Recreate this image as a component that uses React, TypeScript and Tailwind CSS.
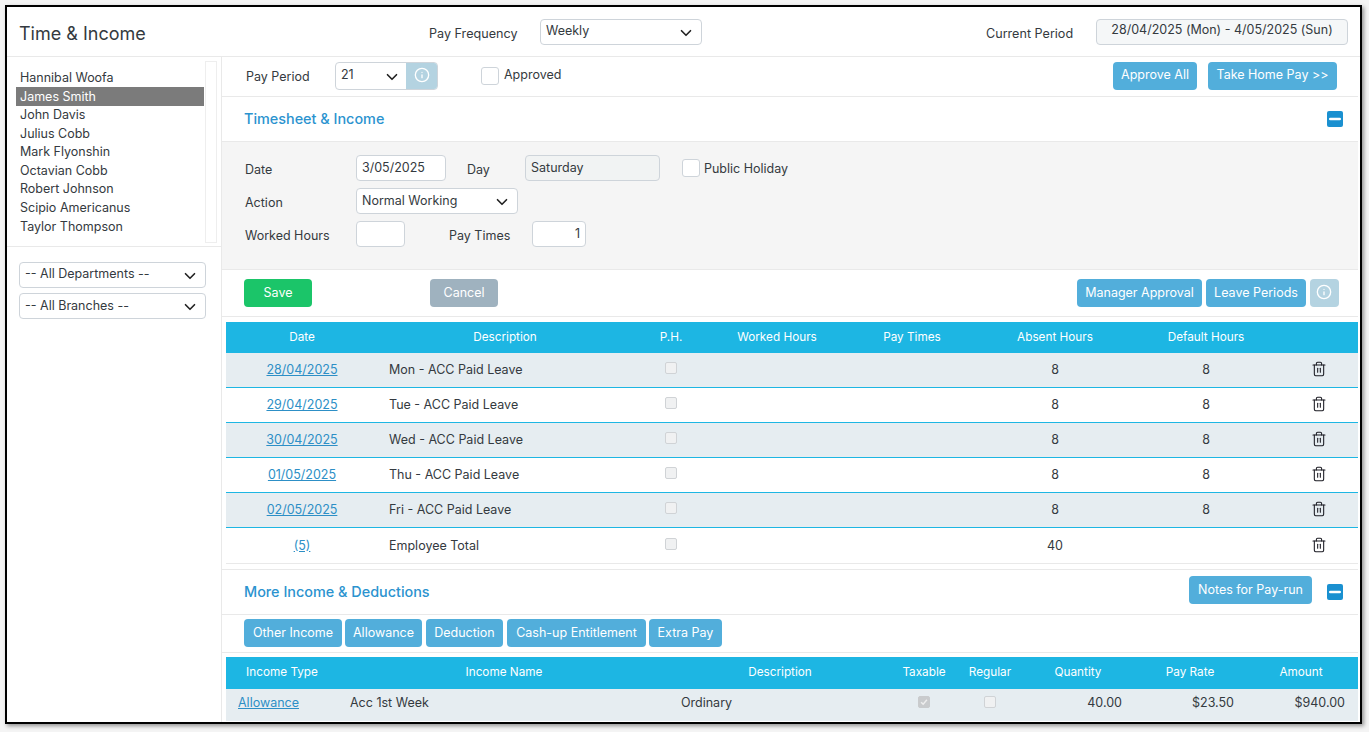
import { ChevronDown, Info, Minus, Trash2 } from "lucide-react";

const employees = [
  "Hannibal Woofa",
  "James Smith",
  "John Davis",
  "Julius Cobb",
  "Mark Flyonshin",
  "Octavian Cobb",
  "Robert Johnson",
  "Scipio Americanus",
  "Taylor Thompson",
];

const timeRows = [
  { date: "28/04/2025", desc: "Mon - ACC Paid Leave" },
  { date: "29/04/2025", desc: "Tue - ACC Paid Leave" },
  { date: "30/04/2025", desc: "Wed - ACC Paid Leave" },
  { date: "01/05/2025", desc: "Thu - ACC Paid Leave" },
  { date: "02/05/2025", desc: "Fri - ACC Paid Leave" },
];

const timeCols = "grid grid-cols-[152px_254px_78px_134px_136px_150px_152px_74px] items-center";
const incomeCols = "grid grid-cols-[112px_332px_220px_68px_64px_112px_112px_110px] items-center";

const Btn = ({
  label,
  className = "",
  color = "bg-[#52aedb]",
}: {
  label: string;
  className?: string;
  color?: string;
}) => (
  <button className={`h-[28px] rounded-[4px] text-[12.5px] leading-none text-white ${color} ${className}`}>
    {label}
  </button>
);

const Select = ({
  label,
  className = "",
  labelClass = "",
}: {
  label: string;
  className?: string;
  labelClass?: string;
}) => (
  <div className={`flex h-[26px] items-center justify-between rounded-[4px] border border-[#ced4da] bg-white pb-[2px] pl-[5px] pr-[6px] text-[12.5px] text-[#343a40] ${className}`}>
    <span className={labelClass}>{label}</span>
    <ChevronDown size={18} strokeWidth={2.2} className="mt-[3px] text-[#222]" />
  </div>
);

const Check = ({ checked = false }: { checked?: boolean }) => (
  <span className={`flex h-[12px] w-[12px] items-center justify-center rounded-[2px] border ${checked ? "border-[#c9cbcd] bg-[#c9cbcd]" : "border-[#d0d3d6] bg-[#f0f1f2]"}`}>
    {checked && (
      <svg viewBox="0 0 12 12" className="h-[10px] w-[10px] text-[#eeeeee]">
        <path d="M2.5 6.2 5 8.6 9.5 3.4" fill="none" stroke="currentColor" strokeWidth="1.8" />
      </svg>
    )}
  </span>
);

const Collapse = () => (
  <span className="flex h-[16px] w-[16px] items-center justify-center rounded-[2px] bg-[#1a90d0]">
    <Minus size={16} strokeWidth={4} className="text-white" />
  </span>
);

const Trash = () => <Trash2 size={16} strokeWidth={1.6} className="mb-[2px] text-[#1c1c24]" />;

const TimeRow = ({ date, desc, shaded }: { date: string; desc: string; shaded: boolean }) => (
  <div className={`${timeCols} h-[35px] border-b border-[#1db6e3] text-[12.5px] ${shaded ? "bg-[#e6edf1]" : "bg-white"}`}>
    <a className="text-center text-[#2d8fc6] underline">{date}</a>
    <span className="pl-[11px]">{desc}</span>
    <span className="mb-[4px] flex justify-center"><Check /></span>
    <span />
    <span />
    <span className="text-center">8</span>
    <span className="text-center">8</span>
    <span className="flex justify-center"><Trash /></span>
  </div>
);

export default function App() {
  return (
    <div className="h-[732px] w-[1369px] overflow-hidden bg-[#f4f4f4] pl-[5px] pt-[5px] font-['Inter',sans-serif] text-[#343a40]">
      <div className="h-[719px] w-[1357px] overflow-hidden border-[2px] border-black bg-white shadow-[2px_2px_4px_rgba(0,0,0,0.4)]">
        {/* top bar */}
        <div className="flex h-[50px] items-center border-b border-[#e9e9e9]">
          <h1 className="ml-[12px] mt-[4px] w-[410px] text-[18px] font-normal text-[#343a40]">Time &amp; Income</h1>
          <span className="mt-[5px] w-[111px] text-[12.6px]">Pay Frequency</span>
          <Select label="Weekly" className="mt-[1px] w-[162px]" />
          <span className="ml-[284px] mt-[5px] w-[110px] text-[12.6px]">Current Period</span>
          <div className="mt-[1px] flex h-[26px] w-[252px] items-center justify-center rounded-[4px] border border-[#ced4da] bg-[#f5f7f8] pb-[3px] text-[12.5px]">
            28/04/2025 (Mon) - 4/05/2025 (Sun)
          </div>
        </div>

        <div className="flex">
          {/* employee sidebar */}
          <aside className="h-[667px] w-[215px] shrink-0 border-r border-[#e9e9e9]">
            <div className="flex h-[190px] border-b border-[#e9e9e9] pl-[9px] pt-[4px]">
              <ul className="mt-[7.5px] w-[188px] text-[12.5px]">
                {employees.map((name, i) => (
                  <li
                    key={name}
                    className={`flex h-[18.6px] items-center pl-[4px] pt-[1px] ${i === 1 ? "bg-[#7b7b7b] text-white" : "text-[#343a40]"}`}
                  >
                    {name}
                  </li>
                ))}
              </ul>
              <div className="ml-[1px] h-[182px] w-[12px] border border-[#eeeeee]" />
            </div>
            <div className="flex flex-col gap-[5px] pl-[12px] pt-[15px]">
              <Select label="-- All Departments --" className="w-[187px]" />
              <Select label="-- All Branches --" className="w-[187px]" labelClass="mt-[2px]" />
            </div>
          </aside>

          <main className="w-[1136px] min-w-0">
            {/* pay period */}
            <div className="flex h-[40px] items-center border-b border-[#e9e9e9] pb-[1px]">
              <span className="ml-[24px] mt-[2px] w-[89px] text-[12.5px]">Pay Period</span>
              <div className="flex h-[28px] w-[103px] overflow-hidden rounded-[4px] border border-[#ced4da]">
                <div className="flex w-[70px] items-center justify-between pb-[1px] pl-[5px] pr-[5px] text-[12.5px]">
                  21
                  <ChevronDown size={18} strokeWidth={2.2} className="mt-[3px] text-[#222]" />
                </div>
                <div className="flex flex-1 items-center justify-center bg-[#b4d3e1] pb-[3px]">
                  <Info size={16} className="text-white" />
                </div>
              </div>
              <span className="ml-[43px] h-[18px] w-[18px] rounded-[3px] border border-[#ced4da] bg-white" />
              <span className="ml-[5px] pb-[2px] text-[12.5px]">Approved</span>
              <div className="ml-auto mr-[21px] flex gap-[11px]">
                <Btn label="Approve All" className="w-[84px] pb-[2px]" />
                <Btn label="Take Home Pay >>" className="w-[129px] pb-[2px]" />
              </div>
            </div>

            {/* timesheet heading */}
            <div className="flex h-[45px] items-center justify-between border-b border-[#e9e9e9] pb-[1px] pl-[22px] pr-[15px]">
              <h2 className="text-[14.4px] font-medium text-[#2b93cf]">Timesheet &amp; Income</h2>
              <Collapse />
            </div>

            {/* entry form */}
            <div className="flex h-[128px] flex-col gap-[7px] border-b border-[#e9e9e9] bg-[#f5f5f5] pl-[23px] pt-[13px] text-[12.5px]">
              <div className="flex h-[26px] items-center">
                <span className="mt-[4px] w-[111px]">Date</span>
                <div className="flex h-[26px] w-[90px] items-center rounded-[4px] border border-[#ced4da] bg-white pl-[5px]">3/05/2025</div>
                <span className="ml-[21px] mt-[4px] w-[58px]">Day</span>
                <div className="flex h-[26px] w-[135px] items-center rounded-[4px] border border-[#ced4da] bg-[#f1f3f3] pl-[5px]">Saturday</div>
                <span className="ml-[22px] h-[18px] w-[18px] rounded-[3px] border border-[#ced4da] bg-white" />
                <span className="ml-[4px] mt-[2px]">Public Holiday</span>
              </div>
              <div className="flex h-[26px] items-center">
                <span className="mt-[5px] w-[111px]">Action</span>
                <Select label="Normal Working" className="w-[162px]" labelClass="mt-[2px]" />
              </div>
              <div className="flex h-[26px] items-center">
                <span className="mt-[5px] w-[111px]">Worked Hours</span>
                <div className="h-[26px] w-[49px] rounded-[4px] border border-[#ced4da] bg-white" />
                <span className="ml-[44px] mt-[5px] w-[83px]">Pay Times</span>
                <div className="flex h-[26px] w-[54px] items-center justify-end rounded-[4px] border border-[#ced4da] bg-white pr-[5px]">1</div>
              </div>
            </div>

            {/* actions */}
            <div className="flex h-[47px] items-center border-b border-[#e9e9e9] pb-[1px] pl-[22px]">
              <Btn label="Save" color="bg-[#1bc569]" className="w-[68px] pt-[1px]" />
              <Btn label="Cancel" color="bg-[#9fb2bf]" className="ml-[118px] w-[68px] pt-[1px]" />
              <div className="ml-auto mr-[19px] flex gap-[4px]">
                <Btn label="Manager Approval" className="w-[125px] pt-[1px]" />
                <Btn label="Leave Periods" className="w-[100px] pt-[1px]" />
                <div className="flex h-[28px] w-[29px] items-center justify-center rounded-[4px] bg-[#b4d3e1] pb-[2px] pr-[1px]">
                  <Info size={16} className="text-white" />
                </div>
              </div>
            </div>

            {/* time table */}
            <div className="ml-[4px] mt-[5px] w-[1132px]">
              <div className={`${timeCols} h-[31px] bg-[#1db6e3] text-center text-[11.75px] text-white`}>
                <span>Date</span>
                <span>Description</span>
                <span>P.H.</span>
                <span>Worked Hours</span>
                <span>Pay Times</span>
                <span>Absent Hours</span>
                <span>Default Hours</span>
                <span />
              </div>
              {timeRows.map((row, i) => (
                <TimeRow key={row.date} date={row.date} desc={row.desc} shaded={i % 2 === 0} />
              ))}
              <div className={`${timeCols} h-[36px] border-b border-[#e9e9e9] pt-[1px] text-[12.5px]`}>
                <a className="text-center text-[#2d8fc6] underline">(5)</a>
                <span className="pl-[11px]">Employee Total</span>
                <span className="mb-[4px] flex justify-center"><Check /></span>
                <span />
                <span />
                <span className="text-center">40</span>
                <span />
                <span className="flex justify-center"><Trash /></span>
              </div>
            </div>

            {/* more income */}
            <div className="mt-[5px] flex h-[46px] items-center border-y border-[#e9e9e9] pl-[22px] pr-[15px]">
              <h2 className="mb-[1px] text-[14.4px] font-medium text-[#2b93cf]">More Income &amp; Deductions</h2>
              <Btn label="Notes for Pay-run" className="mb-[5px] ml-auto mr-[15px] w-[123px] pt-[1px]" />
              <Collapse />
            </div>
            <div className="flex h-[38px] border-b border-[#e9e9e9] pl-[22px] pt-[4px]">
              <Btn label="Other Income" className="w-[98px]" />
              <Btn label="Allowance" className="ml-[3px] w-[77px]" />
              <Btn label="Deduction" className="ml-[4px] w-[77px]" />
              <Btn label="Cash-up Entitlement" className="ml-[4px] w-[139px]" />
              <Btn label="Extra Pay" className="ml-[3px] w-[73px]" />
            </div>

            <div className="ml-[4px] mt-[4px] w-[1132px]">
              <div className={`${incomeCols} h-[32px] bg-[#1db6e3] pb-[1px] text-center text-[11.75px] text-white`}>
                <span>Income Type</span>
                <span>Income Name</span>
                <span>Description</span>
                <span>Taxable</span>
                <span>Regular</span>
                <span>Quantity</span>
                <span>Pay Rate</span>
                <span>Amount</span>
              </div>
              <div className={`${incomeCols} h-[32px] bg-[#e6edf1] pb-[4px] text-[12.5px]`}>
                <a className="pl-[12px] text-[#2d8fc6] underline">Allowance</a>
                <span className="pl-[12px]">Acc 1st Week</span>
                <span className="pl-[11px]">Ordinary</span>
                <span className="mb-[2px] flex justify-center"><Check checked /></span>
                <span className="mb-[2px] flex justify-center"><Check /></span>
                <span className="pr-[12px] text-right">40.00</span>
                <span className="pr-[12px] text-right">$23.50</span>
                <span className="pr-[11px] text-right">$940.00</span>
              </div>
            </div>
          </main>
        </div>
      </div>
    </div>
  );
}
